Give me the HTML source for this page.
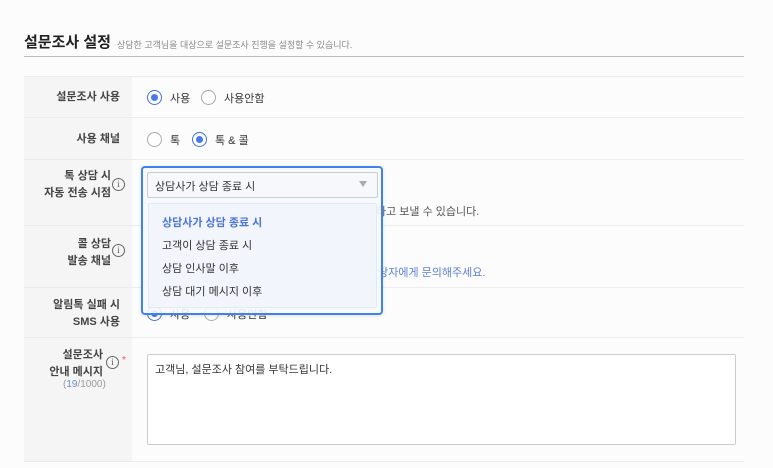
<!DOCTYPE html>
<html><head><meta charset="utf-8"><style>
*{margin:0;padding:0;box-sizing:border-box}
body{width:773px;height:468px;background:#fcfcfc;font-family:"Liberation Sans","Noto Sans CJK KR",sans-serif;color:#333;position:relative;overflow:hidden;font-size:11px}
.a{position:absolute;white-space:nowrap}
.lab{position:absolute;left:24px;width:108px;background:#f5f5f5;border-bottom:1px solid #ececec}
.row{position:absolute;left:132px;width:612px;background:#fcfcfc;border-bottom:1px solid #ececec}
.lt{position:absolute;right:12px;text-align:right;font-weight:bold;color:#444;font-size:11px;line-height:17px}
.rad{position:absolute;width:15px;height:15px;border-radius:50%;border:1.5px solid #aaa;background:#fff}
.rad.on{border:1.5px solid #3f6fe0}
.rad.on::after{content:"";position:absolute;left:2.5px;top:2.5px;width:7px;height:7px;border-radius:50%;background:#4a78ea}
.info{position:absolute;width:13px;height:13px;border:1px solid #666;border-radius:50%;font-size:9px;line-height:11px;text-align:center;color:#555;font-family:"Liberation Serif",serif}
</style></head><body>
<div class="a" style="left:24px;top:31px;font-size:15px;font-weight:bold;color:#222">설문조사 설정</div>
<div class="a" style="left:117px;top:38px;font-size:9px;color:#888">상담한 고객님을 대상으로 설문조사 진행을 설정할 수 있습니다.</div>
<div class="a" style="left:24px;top:56px;width:720px;height:1px;background:#bbb"></div>

<div class="lab" style="top:76px;height:42px;border-top:1px solid #ececec"></div><div class="row" style="top:76px;height:42px;border-top:1px solid #ececec"></div>
<div class="lab" style="top:118px;height:42px"></div><div class="row" style="top:118px;height:42px"></div>
<div class="lab" style="top:160px;height:66px"></div><div class="row" style="top:160px;height:66px"></div>
<div class="lab" style="top:226px;height:62px"></div><div class="row" style="top:226px;height:62px"></div>
<div class="lab" style="top:288px;height:50px"></div><div class="row" style="top:288px;height:50px"></div>
<div class="lab" style="top:338px;height:124px"></div><div class="row" style="top:338px;height:124px"></div>

<div class="lt" style="top:89px;right:653px">설문조사 사용</div>
<div class="rad on" style="left:147px;top:90px"></div><div class="a" style="left:170px;top:90px">사용</div>
<div class="rad" style="left:201px;top:90px"></div><div class="a" style="left:224px;top:90px">사용안함</div>

<div class="lt" style="top:131px;right:653px">사용 채널</div>
<div class="rad" style="left:147px;top:132px"></div><div class="a" style="left:170px;top:132px">톡</div>
<div class="rad on" style="left:192px;top:132px"></div><div class="a" style="left:215px;top:132px">톡 &amp; 콜</div>

<div class="lt" style="top:168px;right:662px">톡 상담 시<br>자동 전송 시점</div>
<div class="info" style="left:112px;top:178px">i</div>
<div class="a" style="left:376px;top:203px;color:#555">하고 보낼 수 있습니다.</div>

<div class="lt" style="top:236px;right:662px">콜 상담<br>발송 채널</div>
<div class="info" style="left:112px;top:244px">i</div>
<div class="a" style="left:368px;top:264px;color:#5b7fd6">담당자에게 문의해주세요.</div>

<div class="lt" style="top:297px;right:653px">알림톡 실패 시<br>SMS 사용</div>
<div class="rad on" style="left:147px;top:306px"></div><div class="a" style="left:170px;top:306px">사용</div>
<div class="rad" style="left:204px;top:306px"></div><div class="a" style="left:227px;top:306px">사용안함</div>

<div class="lt" style="top:347px;right:670px">설문조사<br>안내 메시지</div>
<div class="info" style="left:106px;top:356px">i</div>
<div class="a" style="left:122px;top:355px;color:#e55;font-size:10px">*</div>
<div class="a" style="left:63px;top:379px;font-size:10px;color:#999">(<span style="color:#6b8ad8">19</span>/1000)</div>
<div class="a" style="left:147px;top:354px;width:589px;height:91px;background:#fff;border:1px solid #ccc;border-radius:2px"></div>
<div class="a" style="left:155px;top:361px">고객님, 설문조사 참여를 부탁드립니다.</div>

<div class="a" style="left:141px;top:166px;width:242px;height:149px;border:2px solid #3f82ec;border-radius:4px;background:rgba(245,248,254,0.9);box-shadow:0 1px 4px rgba(0,0,0,.1)"></div>
<div class="a" style="left:147px;top:172px;width:231px;height:26px;border:1px solid #ccc;border-radius:2px;background:#f6f8fc"></div>
<div class="a" style="left:155px;top:178px;color:#333">상담사가 상담 종료 시</div>
<div class="a" style="left:359px;top:181px;width:0;height:0;border-left:4px solid transparent;border-right:4px solid transparent;border-top:6px solid #aaa"></div>
<div class="a" style="left:148px;top:203px;width:229px;height:105px;background:#f2f5fc;border:1px solid #e3e8f2;border-radius:2px"></div>
<div class="a" style="left:162px;top:214px;color:#4a74dc;font-weight:bold">상담사가 상담 종료 시</div>
<div class="a" style="left:162px;top:237px">고객이 상담 종료 시</div>
<div class="a" style="left:162px;top:260px">상담 인사말 이후</div>
<div class="a" style="left:162px;top:283px">상담 대기 메시지 이후</div>
</body></html>
